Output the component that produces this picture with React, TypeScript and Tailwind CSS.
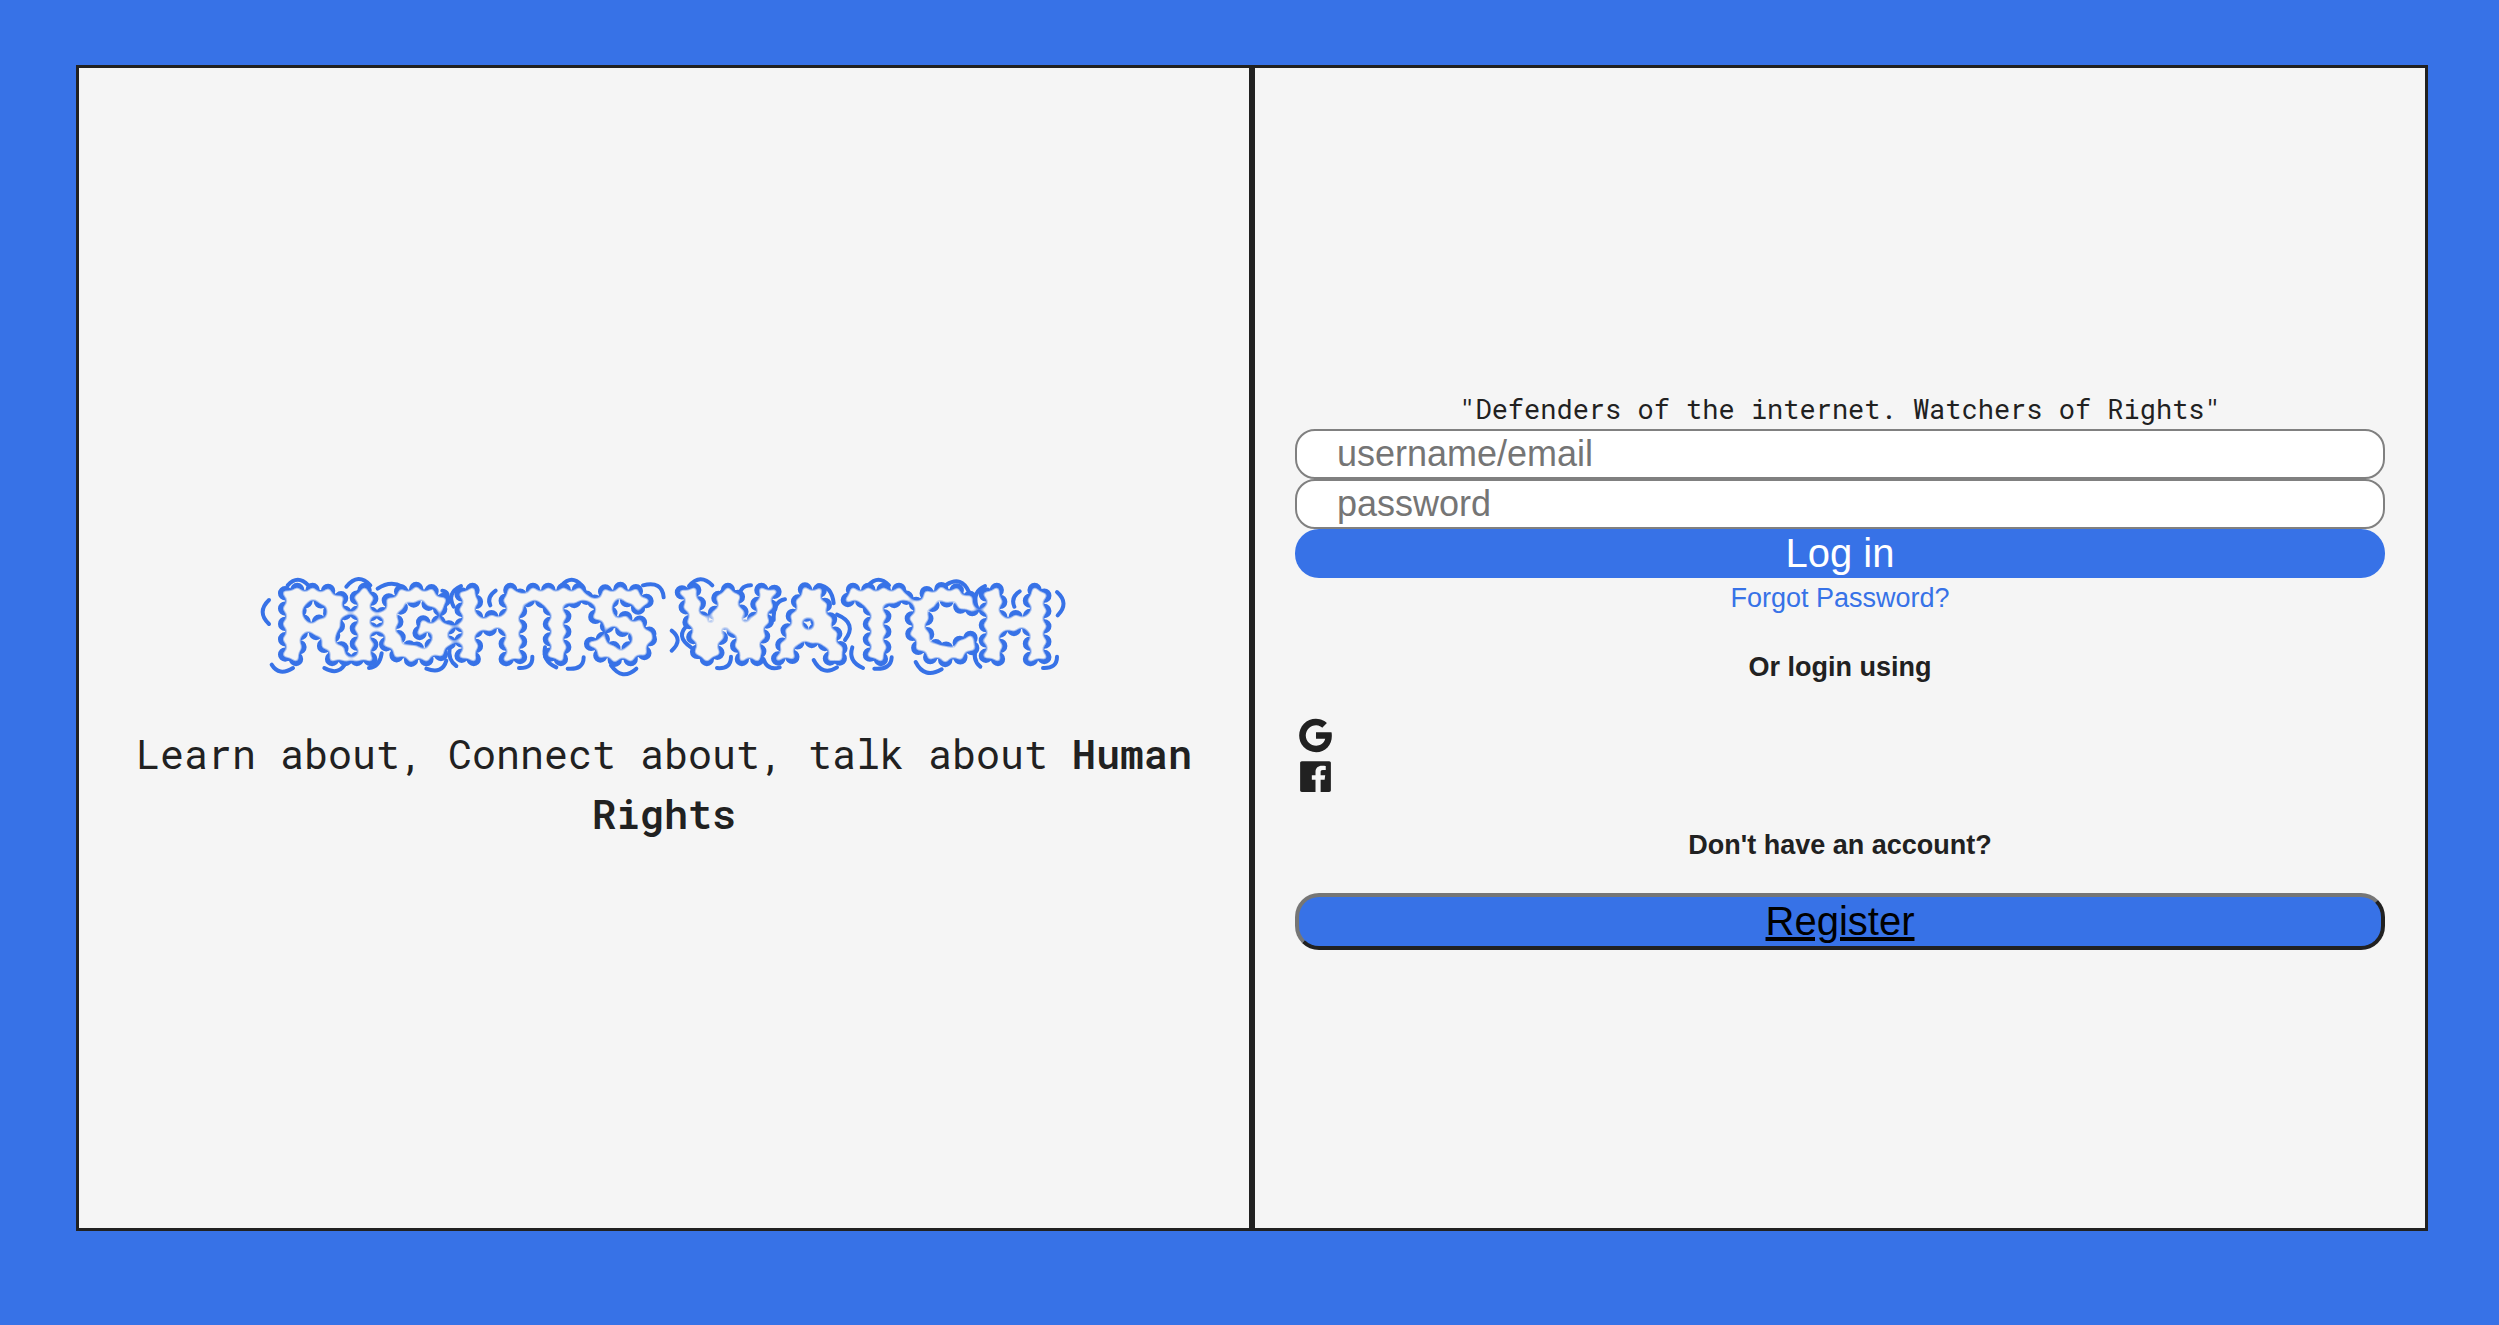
import React from "react";
import { IoLogoFacebook, IoLogoGoogle } from "react-icons/io";

/* Short puffs of air drawn round the bubbly wordmark. */
const puffs = [
  "M60 120Q22 156 60 192",
  "M116 76Q146 42 178 76",
  "M292 80Q328 36 364 76",
  "M68 314Q90 350 132 324",
  "M226 324Q272 350 292 304",
  "M386 86Q424 60 460 80",
  "M360 324Q392 322 398 280",
  "M532 326Q580 344 592 302",
  "M580 92Q604 94 592 128",
  "M636 78Q592 98 614 140",
  "M622 318Q596 300 602 262",
  "M740 92Q712 112 724 136",
  "M810 324Q852 326 850 290",
  "M938 76Q968 42 998 76",
  "M922 322Q880 304 888 262",
  "M956 326Q1004 330 1004 292",
  "M1182 76Q1240 62 1244 112",
  "M1086 316Q1120 364 1162 326",
  "M1268 212Q1304 240 1268 272",
  "M1320 78Q1354 38 1390 76",
  "M1326 262Q1276 228 1318 194",
  "M1506 76Q1468 76 1470 122",
  "M1404 324Q1446 328 1446 290",
  "M1608 118Q1572 124 1574 180",
  "M1708 76Q1748 78 1754 130",
  "M1544 298Q1556 334 1592 322",
  "M1694 300Q1720 350 1764 322",
  "M1764 164Q1826 190 1788 240",
  "M1858 76Q1888 42 1920 76",
  "M1842 324Q1796 304 1810 262",
  "M1876 326Q1926 330 1928 292",
  "M2092 74Q2138 46 2160 96",
  "M2000 306Q2026 358 2078 328",
  "M2208 78Q2170 94 2182 138",
  "M2194 320Q2168 300 2182 256",
  "M2312 94Q2284 112 2296 140",
  "M2424 96Q2462 130 2426 166",
  "M2382 324Q2424 326 2424 290",
];

function Wordmark() {
  return (
    <h1 className="w-full max-w-[830px]">
      <svg
        viewBox="0 0 2490 390"
        className="block h-auto w-full font-['Liberation_Sans'] text-[298px] font-bold [font-kerning:none]"
        strokeLinecap="round"
        strokeLinejoin="round"
      >
        <defs>
          {/* Hollows the letters out: the softened inside is painted in the panel's colour. */}
          <filter
            id="hollow"
            filterUnits="userSpaceOnUse"
            x="0"
            y="0"
            width="2490"
            height="390"
            colorInterpolationFilters="sRGB"
          >
            <feGaussianBlur in="SourceAlpha" stdDeviation="9" result="soft" />
            <feComponentTransfer in="soft" result="inside">
              <feFuncA type="linear" slope="10" intercept="-8.5" />
            </feComponentTransfer>
            <feFlood floodColor="#f5f5f5" />
            <feComposite in2="inside" operator="in" result="fill" />
            <feMerge>
              <feMergeNode in="SourceGraphic" />
              <feMergeNode in="fill" />
            </feMerge>
          </filter>
        </defs>
        <g fill="none" stroke="#3772e7" strokeWidth="12">
          {puffs.map((d) => (
            <path key={d} d={d} />
          ))}
        </g>
        <text
          x="1247"
          y="298"
          textAnchor="middle"
          fill="#3772e7"
          stroke="#3772e7"
          strokeWidth="43"
          strokeDasharray="0 46"
          filter="url(#hollow)"
        >
          RIGHTS WATCH
        </text>
      </svg>
    </h1>
  );
}

function IntroPanel() {
  return (
    <section className="flex flex-col items-center justify-center border-3 border-[#212121] bg-[#f5f5f5] pt-[108px]">
      <Wordmark />
      <p className="mt-[34px] text-center font-['Roboto_Mono','Liberation_Mono',monospace] text-[40px] leading-[60px]">
        Learn about, Connect about, talk about <strong className="font-semibold">Human Rights</strong>
      </p>
    </section>
  );
}

function LoginPanel() {
  return (
    <section className="flex flex-col justify-center border-3 border-[#212121] bg-[#f5f5f5] px-10 pt-[46px]">
      <form className="flex flex-col" onSubmit={(e) => e.preventDefault()}>
        <p className="pb-1 text-center font-['Roboto_Mono','Liberation_Mono',monospace] text-[27px] leading-8">
          "Defenders of the internet. Watchers of Rights"
        </p>
        <input
          type="text"
          aria-label="username/email"
          placeholder="username/email"
          className="h-[50px] w-full rounded-[20px] border-2 border-[#808080] bg-white px-10 text-4xl placeholder:text-[#757575]"
        />
        <input
          type="password"
          aria-label="password"
          placeholder="password"
          className="h-[50px] w-full rounded-[20px] border-2 border-[#808080] bg-white px-10 text-4xl placeholder:text-[#757575]"
        />
        <button type="submit" className="h-[49px] w-full rounded-3xl bg-[#3772e7] text-[40px] leading-none text-white">
          Log in
        </button>
        <a href="#forgot" className="self-center text-[27px] leading-10 text-[#3772e7]">
          Forgot Password?
        </a>
      </form>
      <h2 className="mt-[29px] text-center text-[27px] leading-10 font-bold">Or login using</h2>
      <div className="mt-7 flex flex-col items-start">
        <a href="#google" aria-label="Google">
          <IoLogoGoogle className="size-[41px]" />
        </a>
        <a href="#facebook" aria-label="Facebook">
          <IoLogoFacebook className="size-[41px]" />
        </a>
      </div>
      <h2 className="mt-7 text-center text-[27px] leading-10 font-bold">Don't have an account?</h2>
      <a
        href="#register"
        className="mt-7 block w-full rounded-3xl border-4 border-t-[#767676] border-r-[#212121] border-b-[#212121] border-l-[#767676] bg-[#3772e7] text-center text-[40px] leading-[49px] text-black underline"
      >
        Register
      </a>
    </section>
  );
}

export default function App() {
  return (
    <main className="min-h-screen bg-[#3772e7] pt-[65px] pr-[71px] pl-[76px] font-['Liberation_Sans',Arial,sans-serif] text-[#212121]">
      <div className="grid min-h-[88vh] grid-cols-2">
        <IntroPanel />
        <LoginPanel />
      </div>
    </main>
  );
}
